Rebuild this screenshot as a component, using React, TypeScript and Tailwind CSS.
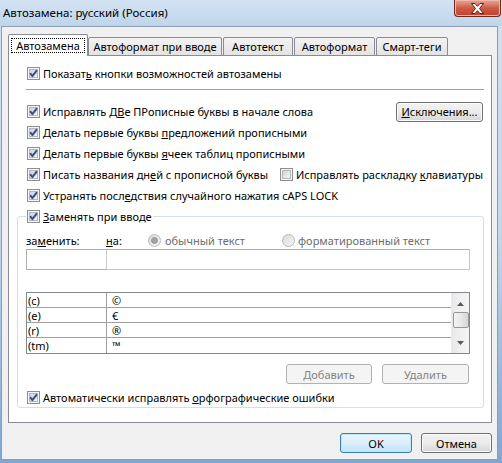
import React from 'react';

const Checkbox = ({ checked = true }: { checked?: boolean }) => (
  <svg width="13" height="13" viewBox="0 0 13 13" className="shrink-0">
    <defs>
      <linearGradient id="cbInner" x1="0" y1="0" x2="1" y2="1">
        <stop offset="0" stopColor="#cdd1d6" />
        <stop offset="1" stopColor="#f7f7f7" />
      </linearGradient>
    </defs>
    <rect x="0.5" y="0.5" width="12" height="12" fill="#f5f5f5" stroke="#8e8f8f" />
    <rect x="2.5" y="2.5" width="8" height="8" fill="url(#cbInner)" stroke="#b4b8bd" />
    {checked && (
      <>
        <path d="M3.2 6.3 L5.4 9 L10 3.2" fill="none" stroke="#8ea2cf" strokeWidth="2.6" strokeLinejoin="round" />
        <path d="M3.2 6.3 L5.4 9 L10 3.2" fill="none" stroke="#34487c" strokeWidth="1.5" />
      </>
    )}
  </svg>
);

const Radio = ({ checked = false }: { checked?: boolean }) => (
  <svg width="13" height="13" viewBox="0 0 13 13" className="shrink-0">
    <defs>
      <linearGradient id="rdInner" x1="0" y1="0" x2="1" y2="1">
        <stop offset="0" stopColor="#d9d9d9" />
        <stop offset="1" stopColor="#f8f8f8" />
      </linearGradient>
    </defs>
    <circle cx="6.5" cy="6.5" r="6" fill="url(#rdInner)" stroke="#b8b8b8" />
    {checked && <circle cx="6.5" cy="6.5" r="3" fill="#a4a4a4" stroke="#8c8c8c" strokeWidth="0.8" />}
  </svg>
);

const Tab = ({ label, width, selected = false, gap = false }: { label: string; width: string; selected?: boolean; gap?: boolean }) => (
  <div
    className={
      selected
        ? `${width} h-[22px] bg-white border-t border-l border-r border-[#898c95] rounded-t-[2px] flex items-start justify-center pt-[3px] whitespace-nowrap`
        : `${width} h-[19px] ${gap ? 'ml-[1px]' : ''} bg-gradient-to-b from-[#f3f3f3] to-[#e3e3e3] border border-[#898c95] rounded-t-[2px] flex items-center justify-center whitespace-nowrap`
    }
  >
    {selected ? (
      <span className="border border-dotted border-black px-[4px] leading-[13px] h-[15px] flex items-center">{label}</span>
    ) : (
      <span className="leading-[14px]">{label}</span>
    )}
  </div>
);

const Row = ({ children }: { children: React.ReactNode }) => (
  <div className="h-[21px] flex items-center gap-[3px] whitespace-nowrap">{children}</div>
);

const WinButton = ({ children, width, disabled = false, isDefault = false }: { children: React.ReactNode; width: string; disabled?: boolean; isDefault?: boolean }) => (
  <div
    className={
      disabled
        ? `${width} h-[20px] rounded-[3px] border border-[#adb2b5] bg-[#f4f4f4] text-[#838383] flex items-center justify-center whitespace-nowrap`
        : isDefault
        ? `${width} h-[20px] rounded-[3px] border border-[#3c7fb1] bg-gradient-to-b from-[#eaf6fd] via-[#dceffb] to-[#c0e2f7] shadow-[inset_0_0_0_1px_#bfe4f8] flex items-center justify-center whitespace-nowrap`
        : `${width} h-[20px] rounded-[3px] border border-[#707070] bg-gradient-to-b from-[#f2f2f2] via-[#ebebeb] to-[#d6d6d6] shadow-[inset_0_0_0_1px_#fcfcfc] flex items-center justify-center whitespace-nowrap`
    }
  >
    {children}
  </div>
);

const entries = [
  ['(c)', '©'],
  ['(e)', '€'],
  ['(r)', '®'],
  ['(tm)', '™'],
];

export default function App() {
  return (
    <div className="w-[502px] h-[463px] overflow-hidden bg-gradient-to-b from-[#d0e1f2] via-[#c4d8ed] to-[#7fa6d2] text-[11px] text-black font-['Noto_Sans',sans-serif] leading-none">
      {/* title bar */}
      <div className="h-[26px] flex justify-between bg-gradient-to-b from-[#d4e3f3] to-[#c0d5eb]">
        <div className="pl-[3px] pt-[6px] text-[11.5px] leading-[14px] whitespace-nowrap">Автозамена: русский (Россия)</div>
        <div className="w-[47px] h-[17px] mr-[1px] rounded-b-[4px] border border-t-0 border-[#6b2a20] bg-gradient-to-b from-[#e6a89a] via-[#cf5a45] to-[#c2402c] shadow-[inset_0_0_0_1px_#f1b8aa] flex items-center justify-center">
          <svg width="15" height="11" viewBox="0 0 15 11">
            <path d="M1.5 0.5 H5 L7.5 3.3 L10 0.5 H13.5 L9.5 5.5 L13.5 10.5 H10 L7.5 7.7 L5 10.5 H1.5 L5.5 5.5 Z" fill="#ffffff" stroke="#5a1f17" strokeWidth="1" strokeLinejoin="round" />
          </svg>
        </div>
      </div>

      {/* window body */}
      <div className="ml-[1px] w-[497px] h-[434px] border border-[#8d9db4] bg-[#f0f0f0] pl-[6px] pt-[7px]">
        {/* tabs */}
        <div className="flex items-end h-[22px] -mb-px relative z-10">
          <Tab label="Автозамена" width="w-[80px]" selected />
          <Tab label="Автоформат при вводе" width="w-[134px]" />
          <Tab label="Автотекст" width="w-[70px]" gap />
          <Tab label="Автоформат" width="w-[81px]" gap />
          <Tab label="Смарт-теги" width="w-[72px]" gap />
        </div>

        {/* tab panel */}
        <div className="w-[484px] h-[368px] border border-[#898c95] bg-white">
          <div className="pl-[18px] pr-[9px] pt-[7px]">
            <Row>
              <Checkbox />
              <span>Показат<u>ь</u> кнопки возможностей автозамены</span>
            </Row>
          </div>
          <div className="ml-[17px] mr-[7px] mt-[5px] h-px bg-[#a0a0a0]" />
          <div className="pl-[18px] pr-[8px] mt-[11px]">
            <div className="h-[21px] flex items-center justify-between whitespace-nowrap">
              <div className="flex items-center gap-[3px]">
                <Checkbox />
                <span>Исправлять Д<u>В</u>е ПРописные буквы в начале слова</span>
              </div>
              <WinButton width="w-[87px]">
                <span><u>И</u>сключения...</span>
              </WinButton>
            </div>
            <Row>
              <Checkbox />
              <span>Делать первые буквы <u>п</u>редложений прописными</span>
            </Row>
            <Row>
              <Checkbox />
              <span>Делать первые буквы <u>я</u>чеек таблиц прописными</span>
            </Row>
            <div className="h-[21px] flex items-center whitespace-nowrap">
              <div className="w-[255px] flex items-center gap-[3px]">
                <Checkbox />
                <span>Писать названия дн<u>е</u>й с прописной буквы</span>
              </div>
              <div className="flex items-center gap-[3px]">
                <Checkbox checked={false} />
                <span>Исправлять раскладку <u>к</u>лавиатуры</span>
              </div>
            </div>
            <Row>
              <Checkbox />
              <span>Устранять посл<u>е</u>дствия случайного нажатия cAPS LOCK</span>
            </Row>
          </div>

          {/* group box */}
          <fieldset className="ml-[8px] mt-[1px] w-[466px] border border-[#d5dfe5] rounded-[3px] pl-[8px] pr-[13px] pb-[1px]">
            <legend className="px-[1px] h-[18px] flex items-center gap-[3px] whitespace-nowrap">
              <Checkbox />
              <span><u>З</u>аменять при вводе</span>
            </legend>
            <div className="mt-[7px] h-[16px] flex items-center whitespace-nowrap">
              <span className="w-[80px]">за<u>м</u>енить:</span>
              <span className="w-[42px]"><u>н</u>а:</span>
              <div className="w-[134px] flex items-center gap-[4px] text-[#6d6d6d]">
                <Radio checked />
                <span>обычный текст</span>
              </div>
              <div className="flex items-center gap-[3px] text-[#6d6d6d]">
                <Radio />
                <span>форматированный текст</span>
              </div>
            </div>
            <div className="mt-[1px] flex">
              <div className="w-[81px] h-[21px] border border-[#abadb3] border-r-[#c8c8c8]" />
              <div className="w-[363px] h-[21px] border border-l-0 border-[#abadb3] border-r-[#c8c8c8] border-b-[#c8c8c8]" />
            </div>

            {/* list */}
            <div className="mt-[22px] w-[444px] h-[62px] border border-[#828790] flex">
              <div className="flex-1">
                {entries.map((e, i) => (
                  <div key={i} className={`h-[15px] flex ${i < 3 ? 'border-b border-[#a0a0a0]' : ''}`}>
                    <div className="w-[80px] border-r border-[#a0a0a0] pl-[1px] flex items-center">{e[0]}</div>
                    <div className="flex-1 pl-[5px] flex items-center">{e[1]}</div>
                  </div>
                ))}
              </div>
              <div className="w-[18px] bg-gradient-to-r from-[#e9e9e9] to-[#f6f6f6] border-l border-[#eaeaea] flex flex-col items-center">
                <svg width="7" height="4" viewBox="0 0 7 4" className="mt-[9px]">
                  <path d="M0 4 L3.5 0 L7 4 Z" fill="#5a5a5a" />
                </svg>
                <div className="mt-[6px] w-[16px] h-[16px] rounded-[2px] border border-[#979797] bg-gradient-to-r from-[#f3f3f3] via-[#e8e8e8] to-[#d6d6d6]" />
                <svg width="7" height="4" viewBox="0 0 7 4" className="mt-[13px]">
                  <path d="M0 0 L3.5 4 L7 0 Z" fill="#5a5a5a" />
                </svg>
              </div>
            </div>

            <div className="mt-[10px] flex justify-end gap-[10px] pr-px">
              <WinButton width="w-[86px]" disabled>Добавить</WinButton>
              <WinButton width="w-[87px]" disabled>Удалить</WinButton>
            </div>
            <div className="mt-[5px] h-[17px] flex items-center gap-[3px] ml-px whitespace-nowrap">
              <Checkbox />
              <span>Автоматически исправлять <u>о</u>рфографические ошибки</span>
            </div>
          </fieldset>
        </div>

        {/* dialog buttons */}
        <div className="w-[484px] mt-[10px] flex justify-end gap-[9px]">
          <WinButton width="w-[72px]" isDefault>OK</WinButton>
          <WinButton width="w-[71px]">Отмена</WinButton>
        </div>
      </div>
    </div>
  );
}
